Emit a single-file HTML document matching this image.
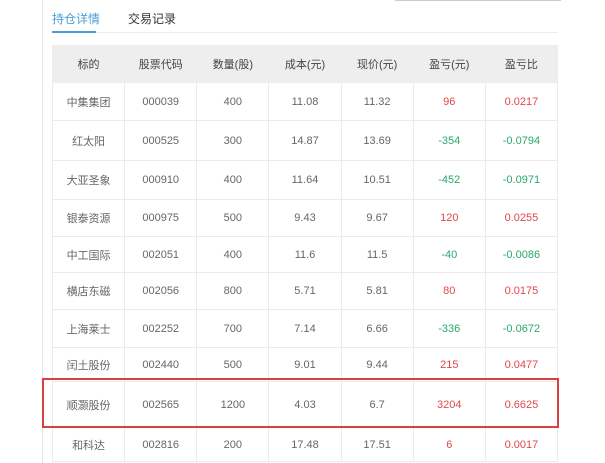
<!DOCTYPE html>
<html><head><meta charset="utf-8"><style>
body{margin:0;width:605px;height:463px;background:#fff;position:relative;overflow:hidden;font-family:"Liberation Sans","Noto Sans CJK SC",sans-serif;}
.vl{position:absolute;left:42px;top:0;width:1px;height:463px;background:#e6e6e6}
.top{position:absolute;left:395px;top:0;width:166px;height:1px;background:#ccc}
.tab{position:absolute;top:10px;font-size:12px;color:#333}
.ul{position:absolute;left:52px;top:31px;width:44px;height:2px;background:#4a9fd8}
.hl{position:absolute;left:52px;top:32px;width:506px;height:1px;background:#eee}
table{position:absolute;left:52px;top:45px;width:506px;border-collapse:collapse;font-size:11px;color:#666;table-layout:fixed}
td{border:1px solid #ebebeb;text-align:center;padding:0}
tr.h td{background:#eeeeee;color:#444;height:36px;border-color:#eee}
.r{color:#e0474c}.g{color:#2aa86a}
.box{position:absolute;left:42px;top:378px;width:513px;height:46px;border:2px solid #d9403f}
</style></head><body>
<div class="vl"></div><div class="top"></div>
<div class="tab" style="left:52px;color:#4a9fd8">持仓详情</div>
<div class="tab" style="left:128px">交易记录</div>
<div class="hl"></div><div class="ul"></div>
<table>
<tr class="h"><td>标的</td><td>股票代码</td><td>数量(股)</td><td>成本(元)</td><td>现价(元)</td><td>盈亏(元)</td><td>盈亏比</td></tr>
<tr style="height:38px"><td>中集集团</td><td>000039</td><td>400</td><td>11.08</td><td>11.32</td><td class="r">96</td><td class="r">0.0217</td></tr>
<tr style="height:40px"><td>红太阳</td><td>000525</td><td>300</td><td>14.87</td><td>13.69</td><td class="g">-354</td><td class="g">-0.0794</td></tr>
<tr style="height:39px"><td>大亚圣象</td><td>000910</td><td>400</td><td>11.64</td><td>10.51</td><td class="g">-452</td><td class="g">-0.0971</td></tr>
<tr style="height:37px"><td>银泰资源</td><td>000975</td><td>500</td><td>9.43</td><td>9.67</td><td class="r">120</td><td class="r">0.0255</td></tr>
<tr style="height:36px"><td>中工国际</td><td>002051</td><td>400</td><td>11.6</td><td>11.5</td><td class="g">-40</td><td class="g">-0.0086</td></tr>
<tr style="height:37px"><td>横店东磁</td><td>002056</td><td>800</td><td>5.71</td><td>5.81</td><td class="r">80</td><td class="r">0.0175</td></tr>
<tr style="height:38px"><td>上海莱士</td><td>002252</td><td>700</td><td>7.14</td><td>6.66</td><td class="g">-336</td><td class="g">-0.0672</td></tr>
<tr style="height:34px"><td>闰土股份</td><td>002440</td><td>500</td><td>9.01</td><td>9.44</td><td class="r">215</td><td class="r">0.0477</td></tr>
<tr style="height:46px"><td>顺灏股份</td><td>002565</td><td>1200</td><td>4.03</td><td>6.7</td><td class="r">3204</td><td class="r">0.6625</td></tr>
<tr style="height:34px"><td>和科达</td><td>002816</td><td>200</td><td>17.48</td><td>17.51</td><td class="r">6</td><td class="r">0.0017</td></tr>
</table>
<div class="box"></div>
</body></html>
